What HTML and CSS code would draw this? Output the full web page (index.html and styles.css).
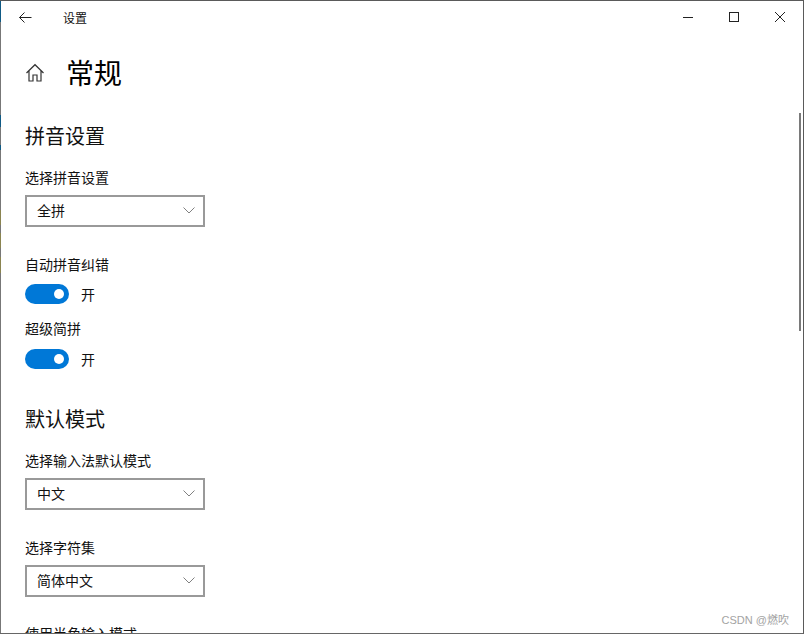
FILE: index.html
```html
<!DOCTYPE html>
<html lang="zh-CN">
  <head>
    <meta charset="UTF-8" />
    <title>设置</title>
    <link rel="stylesheet" href="styles.css">
  </head>
  <body>
    <div class="window">
      <div class="desktop-edge"></div>
      <div class="titlebar">
        <svg class="back-icon" width="16" height="14" viewBox="0 0 16 14">
          <path d="M6.5 2.5 L1.5 7.5 L6.5 12.5 M1.5 7.5 H13.5" fill="none" stroke="#222" stroke-width="1" />
        </svg>
        <span class="title-text">设置</span>
        <div class="window-controls">
          <svg class="win-btn" width="46" height="14" viewBox="0 0 46 14">
            <path d="M18 7.5 H28" stroke="#222" stroke-width="1" />
          </svg>
          <svg class="win-btn" width="46" height="14" viewBox="0 0 46 14">
            <rect x="18.5" y="2.5" width="9" height="9" fill="none" stroke="#222" stroke-width="1" />
          </svg>
          <svg class="win-btn" width="46" height="14" viewBox="0 0 46 14">
            <path d="M18 2 L28 12 M28 2 L18 12" stroke="#222" stroke-width="1" />
          </svg>
        </div>
      </div>

      <div class="content">
        <div class="page-head">
          <svg class="home-icon" width="20" height="20" viewBox="0 0 20 20">
            <path d="M1.5 10 L10 1.7 L18.5 10 M4 8 V18 H8 V12 H12 V18 H16 V8" fill="none" stroke="#333" stroke-width="1.2" />
          </svg>
          <h1>常规</h1>
        </div>

        <h2>拼音设置</h2>
        <div class="field-label">选择拼音设置</div>
        <div class="select"><span>全拼</span><svg class="chevron" width="12" height="7" viewBox="0 0 12 7"><path d="M0.5 0.5 L6 6 L11.5 0.5" fill="none" stroke="#808080" stroke-width="1" /></svg></div>

        <div class="field-label toggle-first">自动拼音纠错</div>
        <div class="toggle-row"><div class="toggle"><div class="knob"></div></div><span>开</span></div>
        <div class="field-label toggle-second">超级简拼</div>
        <div class="toggle-row"><div class="toggle"><div class="knob"></div></div><span>开</span></div>

        <h2 class="mode-head">默认模式</h2>
        <div class="field-label mode-label">选择输入法默认模式</div>
        <div class="select"><span>中文</span><svg class="chevron" width="12" height="7" viewBox="0 0 12 7"><path d="M0.5 0.5 L6 6 L11.5 0.5" fill="none" stroke="#808080" stroke-width="1" /></svg></div>

        <div class="field-label charset">选择字符集</div>
        <div class="select"><span>简体中文</span><svg class="chevron" width="12" height="7" viewBox="0 0 12 7"><path d="M0.5 0.5 L6 6 L11.5 0.5" fill="none" stroke="#808080" stroke-width="1" /></svg></div>

        <div class="field-label cut-off">使用半角输入模式</div>
      </div>

      <div class="scrollbar"></div>
      <div class="watermark">CSDN @燃吹</div>
    </div>
  </body>
</html>
```

FILE: styles.css
```css
html,
body {
  margin: 0;
  padding: 0;
  height: 100%;
  overflow: hidden;
}
body {
  font-family: "Noto Sans CJK SC", "Liberation Sans", sans-serif;
  background-color: #fff;
  color: #000;
}
.window {
  position: relative;
  box-sizing: border-box;
  width: 804px;
  height: 634px;
  padding-left: 1px;
  background-color: #fff;
  border: 1px solid #5a5a5a;
  border-left: none;
  border-bottom-color: #666;
  overflow: hidden;
}
/* desktop colours showing through the left window edge */
.desktop-edge {
  position: absolute;
  top: 0;
  left: 0;
  width: 1px;
  height: 100%;
  background: linear-gradient(
    to bottom,
    #0f5a85 0 21px,
    #777 21px 114px,
    #0f5a85 114px 126px,
    #777 126px 144px,
    #0f5a85 144px 149px,
    #777 149px 209px,
    #8a8450 209px 224px,
    #777 224px 232px,
    #8a8450 232px 247px,
    #777 247px 256px,
    #8a8450 256px 272px,
    #777 272px
  );
}
.titlebar {
  display: flex;
  align-items: center;
  height: 32px;
  padding-left: 17px;
}
.title-text {
  margin-left: 29px;
  font-size: 12px;
  color: #111;
}
.window-controls {
  display: flex;
  margin-left: auto;
}
.win-btn {
  display: block;
}
.content {
  padding: 0 0 0 24px;
}
.page-head {
  display: flex;
  align-items: center;
  height: 40px;
  margin-top: 19px;
}
.home-icon {
  margin-top: 2px;
}
.page-head h1 {
  margin: 0 0 0 21px;
  font-size: 28px;
  font-weight: 400;
  line-height: 40px;
}
h2 {
  margin: 29px 0 0 0;
  font-size: 20px;
  font-weight: 400;
  line-height: 30px;
  color: #111;
}
.field-label {
  margin-top: 16px;
  font-size: 14px;
  line-height: 20px;
  color: #111;
}
.select {
  display: flex;
  align-items: center;
  justify-content: space-between;
  box-sizing: border-box;
  width: 180px;
  height: 32px;
  margin-top: 8px;
  padding: 0 8px 2px 10px;
  border: 2px solid #999;
  font-size: 14px;
  color: #111;
}
.toggle-first {
  margin-top: 27px;
}
.toggle-second {
  margin-top: 14px;
}
.toggle-row {
  display: flex;
  align-items: center;
  height: 20px;
  margin-top: 10px;
  font-size: 14px;
  color: #111;
}
.toggle-second + .toggle-row {
  margin-top: 11px;
}
.toggle-row span {
  margin-left: 12px;
}
.toggle {
  display: flex;
  align-items: center;
  justify-content: flex-end;
  box-sizing: border-box;
  width: 44px;
  height: 20px;
  padding-right: 5px;
  border-radius: 10px;
  background-color: #0078d7;
}
.knob {
  width: 10px;
  height: 10px;
  border-radius: 50%;
  background-color: #fff;
}
.mode-head {
  margin-top: 35px;
}
.mode-label {
  margin-top: 16px;
}
.charset {
  margin-top: 27px;
}
.cut-off {
  margin-top: 26px;
}
.scrollbar {
  position: absolute;
  top: 112px;
  right: 2px;
  width: 2px;
  height: 218px;
  background-color: #7a7a7a;
}
.watermark {
  position: absolute;
  right: 14px;
  bottom: 6px;
  font-family: "Liberation Sans", "Noto Sans CJK SC", sans-serif;
  font-size: 11px;
  color: #a3a3a3;
}
```
